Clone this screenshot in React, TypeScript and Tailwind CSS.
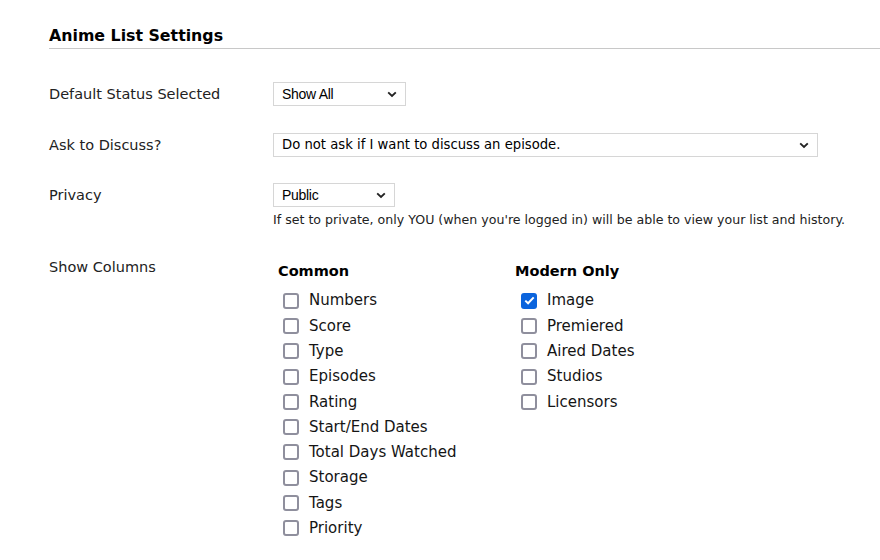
import { useState } from 'react';

const common = [
  'Numbers',
  'Score',
  'Type',
  'Episodes',
  'Rating',
  'Start/End Dates',
  'Total Days Watched',
  'Storage',
  'Tags',
  'Priority',
];

const modern = ['Image', 'Premiered', 'Aired Dates', 'Studios', 'Licensors'];

function Chevron() {
  return (
    <svg width="10" height="7" viewBox="0 0 10 7" className="shrink-0">
      <path d="M1.2 1.4 L5 5 L8.8 1.4" fill="none" stroke="#222" strokeWidth="1.9" />
    </svg>
  );
}

function FakeSelect({ value, width, narrow }: { value: string; width: string; narrow?: boolean }) {
  return (
    <div
      className={`flex h-[24px] items-center justify-between border border-[#d6d6d6] bg-white pl-[8px] pr-[8px] ${width}`}
    >
      <span
        className={
          narrow
            ? "font-['Liberation_Sans',Arial,sans-serif] text-[14px] tracking-[-0.3px] text-black"
            : 'text-[13.2px] text-black'
        }
      >
        {value}
      </span>
      <Chevron />
    </div>
  );
}

function Check({ label, checked }: { label: string; checked: boolean }) {
  const [on, setOn] = useState(checked);
  return (
    <label className="flex h-[25.3px] cursor-pointer items-center gap-[10px]" onClick={() => setOn(!on)}>
      {on ? (
        <span className="flex h-[16px] w-[16px] items-center justify-center rounded-[3px] bg-[#0b64dd]">
          <svg width="11" height="9" viewBox="0 0 11 9">
            <path d="M1.3 4.6 L4.1 7.3 L9.7 1.4" fill="none" stroke="white" strokeWidth="2" />
          </svg>
        </span>
      ) : (
        <span className="h-[16px] w-[16px] rounded-[3px] border-2 border-[#8f8f9d] bg-white" />
      )}
      <span className="text-[15px] text-[#151515]">{label}</span>
    </label>
  );
}

export default function App() {
  return (
    <div className="min-h-[560px] w-[880px] bg-white pl-[49px] font-['DejaVu_Sans',Verdana,sans-serif] text-[14.5px] text-[#222]">
      {/* header */}
      <div className="border-b border-[#c8c8c8] pb-[2px] pt-[26px]">
        <h2 className="text-[15.8px] font-bold leading-[20px] text-black">Anime List Settings</h2>
      </div>

      {/* Default status */}
      <div className="mt-[33px] flex items-center">
        <div className="w-[224px] pt-[1px]">Default Status Selected</div>
        <FakeSelect value="Show All" width="w-[133px]" narrow />
      </div>

      {/* Ask to discuss */}
      <div className="mt-[27px] flex items-center">
        <div className="w-[224px] pt-[1px]">Ask to Discuss?</div>
        <FakeSelect value="Do not ask if I want to discuss an episode." width="w-[545px]" />
      </div>

      {/* Privacy */}
      <div className="mt-[26px] flex">
        <div className="w-[224px] pt-[2px]">Privacy</div>
        <div>
          <FakeSelect value="Public" width="w-[122px]" narrow />
          <p className="mt-[4px] text-[12.6px] leading-[17px] text-[#222]">
            If set to private, only YOU (when you're logged in) will be able to view your list and history.
          </p>
        </div>
      </div>

      {/* Show columns */}
      <div className="mt-[29px] flex">
        <div className="w-[224px]">Show Columns</div>
        <div className="flex pl-[5px]">
          <div className="w-[237px]">
            <div className="mt-[5px] text-[14.5px] font-bold leading-[18px] text-black">Common</div>
            <div className="mt-[8px] pl-[5px]">
              {common.map((c) => (
                <Check key={c} label={c} checked={false} />
              ))}
            </div>
          </div>
          <div>
            <div className="mt-[5px] text-[14.5px] font-bold leading-[18px] text-black">Modern Only</div>
            <div className="mt-[8px] pl-[6px]">
              {modern.map((c) => (
                <Check key={c} label={c} checked={c === 'Image'} />
              ))}
            </div>
          </div>
        </div>
      </div>
    </div>
  );
}
